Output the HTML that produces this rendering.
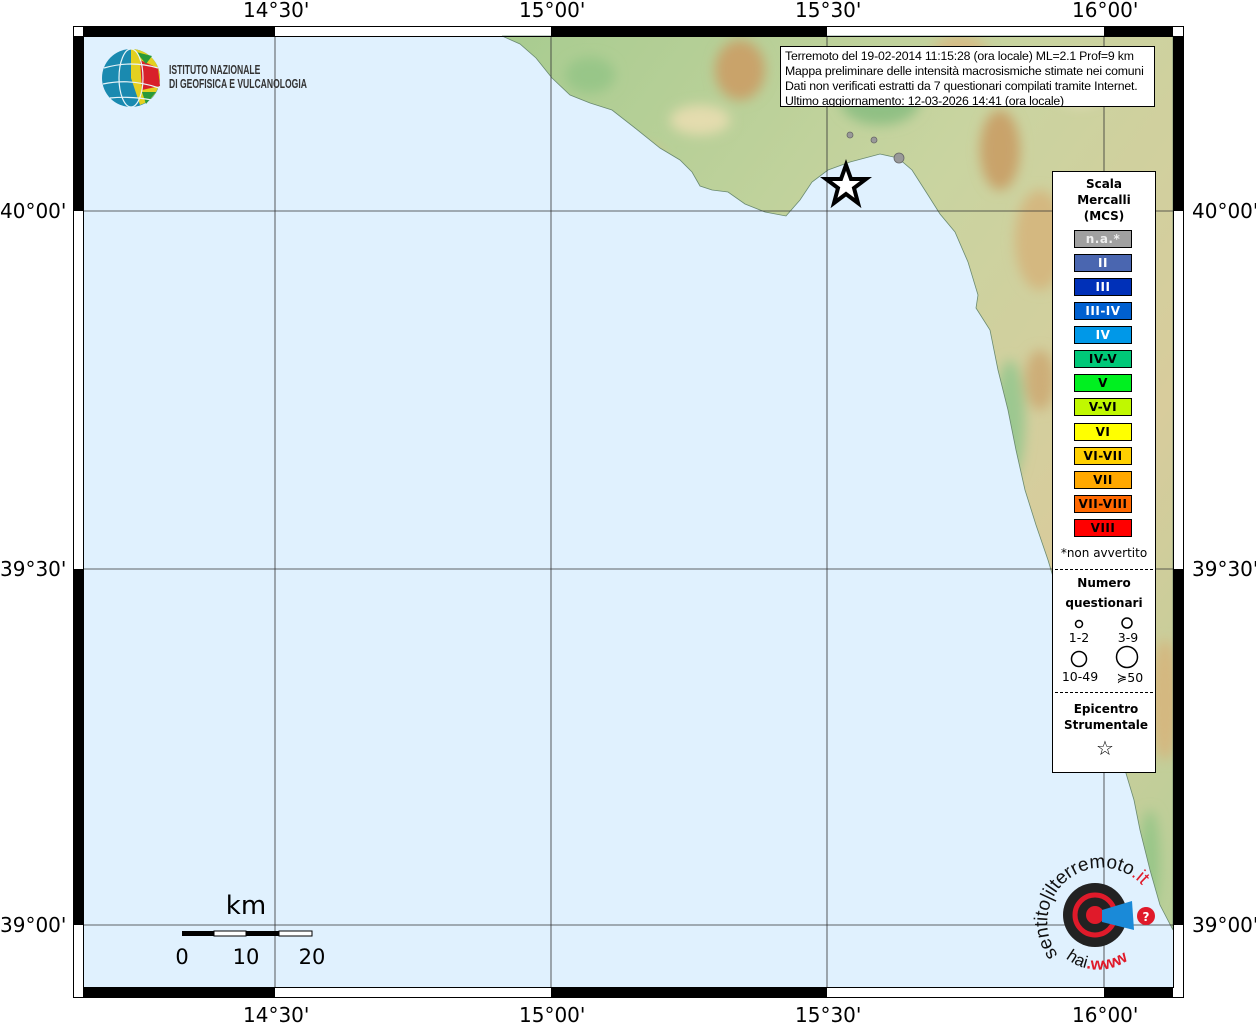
<!DOCTYPE html>
<html><head><meta charset="utf-8"><style>
body{margin:0;width:1256px;height:1024px;background:#fff;position:relative;overflow:hidden;font-family:"DejaVu Sans","Liberation Sans",sans-serif}
.ax{position:absolute;font-family:"DejaVu Sans",sans-serif;font-size:20px;color:#000;line-height:20px}
.lg{position:absolute;left:1052px;top:171px;width:102px;height:600px;background:#fff;border:1px solid #000}
.b{position:absolute;left:21px;width:56px;height:16px;border:1px solid #000;font-weight:bold;font-size:12px;text-align:center;line-height:16px;letter-spacing:.5px}
.t{position:absolute;width:102px;text-align:center;font-size:12px;font-weight:bold;line-height:16px}
.info{position:absolute;left:780px;top:46px;width:375px;height:61px;background:#fff;border:1px solid #000;font-family:"Liberation Sans",sans-serif;font-size:12.3px;line-height:15px;padding:2px 0 0 4px;box-sizing:border-box;white-space:nowrap;overflow:hidden;letter-spacing:-.2px}
</style></head><body>
<svg width="1256" height="1024" style="position:absolute;left:0;top:0">
<defs><linearGradient id="lnd" x1="0" y1="0" x2="1" y2="1"><stop offset="0" stop-color="#a8cc90"/><stop offset=".4" stop-color="#c9d4a0"/><stop offset=".7" stop-color="#d8cc9c"/><stop offset="1" stop-color="#b8cf98"/></linearGradient>
<filter id="bl"><feGaussianBlur stdDeviation="6"/></filter>
<clipPath id="lc"><path id="land" d="M502 36 L520 44 L536 58 L552 78 L570 95 L590 103 L612 110 L635 128 L660 148 L680 160 L692 172 L700 186 L712 190 L728 192 L745 204 L765 212 L786 216 L800 200 L812 182 L828 170 L850 162 L880 154 L898 158 L912 170 L928 195 L940 214 L955 232 L968 262 L978 295 L976 308 L990 330 L998 370 L1008 410 L1016 450 L1025 490 L1036 525 L1048 560 L1060 600 L1075 640 L1092 680 L1108 720 L1122 760 L1134 800 L1140 830 L1150 870 L1160 905 L1173 930 L1173 36 Z"/></clipPath></defs>
<rect x="83" y="36" width="1090" height="951" fill="#e0f1fe"/>
<use href="#land" fill="url(#lnd)"/>
<g clip-path="url(#lc)" filter="url(#bl)">
<ellipse cx="740" cy="70" rx="25" ry="30" fill="#c9a36a"/>
<ellipse cx="700" cy="120" rx="30" ry="15" fill="#e4dcae"/>
<ellipse cx="640" cy="160" rx="25" ry="15" fill="#d8c08a"/>
<ellipse cx="1000" cy="150" rx="20" ry="40" fill="#c9a36a"/>
<ellipse cx="1080" cy="80" rx="30" ry="25" fill="#e8e0c0"/>
<ellipse cx="960" cy="60" rx="30" ry="25" fill="#d6bc86"/>
<ellipse cx="880" cy="100" rx="40" ry="25" fill="#90c084"/>
<ellipse cx="1040" cy="240" rx="25" ry="50" fill="#d4b880"/>
<ellipse cx="1010" cy="420" rx="15" ry="60" fill="#9cc890"/>
<ellipse cx="1040" cy="380" rx="15" ry="30" fill="#cdae78"/>
<ellipse cx="1165" cy="700" rx="15" ry="60" fill="#d4b880"/>
<ellipse cx="1150" cy="860" rx="10" ry="50" fill="#98c688"/>
<ellipse cx="590" cy="75" rx="25" ry="18" fill="#98c688"/>
</g>
<use href="#land" fill="none" stroke="#6a8a70" stroke-width="0.8"/>
<g stroke="#333" stroke-width="0.8"><line x1="275" y1="36" x2="275" y2="987"/><line x1="551" y1="36" x2="551" y2="987"/><line x1="827" y1="36" x2="827" y2="987"/><line x1="1104" y1="36" x2="1104" y2="987"/><line x1="83" y1="211" x2="1173" y2="211"/><line x1="83" y1="569" x2="1173" y2="569"/><line x1="83" y1="925" x2="1173" y2="925"/></g>
<rect x="73.5" y="26.5" width="1110" height="971" fill="none" stroke="#000"/>
<rect x="83.5" y="36.5" width="1090" height="951" fill="none" stroke="#000"/>
<g fill="#000"><rect x="83" y="27" width="192" height="9"/><rect x="551" y="27" width="276" height="9"/><rect x="1104" y="27" width="69" height="9"/>
<rect x="83" y="988" width="192" height="9"/><rect x="551" y="988" width="276" height="9"/><rect x="1104" y="988" width="69" height="9"/>
<rect x="74" y="36" width="9" height="175"/><rect x="74" y="569" width="9" height="356"/>
<rect x="1174" y="36" width="9" height="175"/><rect x="1174" y="569" width="9" height="356"/></g>
<g fill="#999" stroke="#666" stroke-width="0.8"><circle cx="850" cy="135" r="3"/><circle cx="874" cy="140" r="3"/><circle cx="899" cy="158" r="5"/></g>
<path d="M846 165 L851 179 L866 179 L854 188 L858 203 L846 194 L834 203 L838 188 L826 179 L841 179 Z" fill="#fff" stroke="#000" stroke-width="4" stroke-linejoin="miter"/>
<g><rect x="182" y="931" width="32" height="5" fill="#000"/><rect x="214" y="931" width="32" height="5" fill="#fff" stroke="#000" stroke-width="1"/><rect x="246" y="931" width="33" height="5" fill="#000"/><rect x="279" y="931" width="33" height="5" fill="#fff" stroke="#000" stroke-width="1"/></g>
<text x="246" y="914" font-family="DejaVu Sans" font-size="26" text-anchor="middle">km</text>
<g font-family="DejaVu Sans" font-size="21" text-anchor="middle"><text x="182" y="964">0</text><text x="246" y="964">10</text><text x="312" y="964">20</text></g>
<!-- INGV logo -->
<circle cx="131" cy="78" r="29" fill="#1a8ab0"/>
<path d="M131 49 A29 29 0 0 1 160 78 A29 29 0 0 1 140 105 L131 78 Z" fill="#e4d020"/>
<path d="M140 60 L158 68 L160 86 L142 90 Z" fill="#d8202a"/>
<path d="M142 92 L156 92 L146 104 Z" fill="#2a9a3a"/>
<path d="M136 52 L152 56 L146 64 Z" fill="#2a9a3a"/>
<g stroke="#e8f4f8" stroke-width="1.2" fill="none"><ellipse cx="131" cy="78" rx="12" ry="29"/><path d="M104 68 Q131 60 158 68"/><path d="M103 84 Q131 78 159 88"/><path d="M110 98 Q131 96 152 100"/></g>
<!-- hai sentito logo -->
<circle cx="1095" cy="915" r="32" fill="#222"/>
<circle cx="1095" cy="915" r="20" fill="none" stroke="#e01a2a" stroke-width="5"/>
<circle cx="1095" cy="915" r="9" fill="#e01a2a"/>
<path d="M1102 910 L1132 901 L1134 930 L1102 922 Z" fill="#1a8ad8"/>
<circle cx="1146" cy="916" r="9" fill="#e01a2a"/>
<text x="1146" y="921" font-size="12" font-weight="bold" fill="#fff" text-anchor="middle">?</text>
<path id="arc" d="M1058 955 A52 52 0 1 1 1146 890" fill="none"/>
<text font-family="Liberation Sans" font-size="19" fill="#111"><textPath href="#arc">sentito|ilterremoto<tspan fill="#e01a2a">.it</tspan></textPath></text>
<path id="arc2" d="M1056 948 A52 52 0 0 0 1146 938" fill="none"/>
<text font-family="Liberation Sans" font-size="17" fill="#111"><textPath href="#arc2" startOffset="14">hai<tspan fill="#e01a2a" font-weight="bold">.www</tspan></textPath></text>
</svg>
<div style="position:absolute;left:169px;top:63px;font-family:'Liberation Sans',sans-serif;font-weight:bold;font-size:13px;line-height:14px;color:#333;transform:scaleX(.66);transform-origin:0 0;white-space:nowrap">ISTITUTO NAZIONALE<br>DI GEOFISICA E VULCANOLOGIA</div>
<div class="ax" style="left:243px;top:0">14°30'</div><div class="ax" style="left:519px;top:0">15°00'</div><div class="ax" style="left:795px;top:0">15°30'</div><div class="ax" style="left:1072px;top:0">16°00'</div>
<div class="ax" style="left:243px;top:1005px">14°30'</div><div class="ax" style="left:519px;top:1005px">15°00'</div><div class="ax" style="left:795px;top:1005px">15°30'</div><div class="ax" style="left:1072px;top:1005px">16°00'</div>
<div class="ax" style="left:0;top:201px">40°00'</div><div class="ax" style="left:0;top:559px">39°30'</div><div class="ax" style="left:0;top:915px">39°00'</div>
<div class="ax" style="left:1192px;top:201px">40°00'</div><div class="ax" style="left:1192px;top:559px">39°30'</div><div class="ax" style="left:1192px;top:915px">39°00'</div>
<div class="info">Terremoto del 19-02-2014 11:15:28 (ora locale) ML=2.1 Prof=9 km<br>Mappa preliminare delle intensità macrosismiche stimate nei comuni<br>Dati non verificati estratti da 7 questionari compilati tramite Internet.<br>Ultimo aggiornamento: 12-03-2026 14:41 (ora locale)</div>
<div class="lg">
<div class="t" style="top:4px">Scala<br>Mercalli<br>(MCS)</div>
<div class="b" style="top:58px;background:#a0a0a0;color:#eee">n.a.*</div>
<div class="b" style="top:82px;background:#4a66b0;color:#fff">II</div>
<div class="b" style="top:106px;background:#0030b8;color:#fff">III</div>
<div class="b" style="top:130px;background:#0060d0;color:#fff">III-IV</div>
<div class="b" style="top:154px;background:#0098e8;color:#fff">IV</div>
<div class="b" style="top:178px;background:#00c878">IV-V</div>
<div class="b" style="top:202px;background:#00f020">V</div>
<div class="b" style="top:226px;background:#c0f800">V-VI</div>
<div class="b" style="top:251px;background:#ffff00">VI</div>
<div class="b" style="top:275px;background:#ffd000">VI-VII</div>
<div class="b" style="top:299px;background:#ffa800">VII</div>
<div class="b" style="top:323px;background:#ff6800">VII-VIII</div>
<div class="b" style="top:347px;background:#ff0000">VIII</div>
<div class="t" style="top:373px;font-weight:normal;font-size:12px">*non avvertito</div>
<div style="position:absolute;left:2px;right:2px;top:397px;border-top:1px dashed #000"></div>
<div class="t" style="top:401px;line-height:20px">Numero<br>questionari</div>
<svg style="position:absolute;left:0;top:440px" width="102" height="80"><g fill="none" stroke="#000" stroke-width="1.5"><circle cx="26" cy="12" r="3.5"/><circle cx="74" cy="11" r="5"/><circle cx="26" cy="47" r="7.5"/><circle cx="74" cy="45" r="10.5"/></g>
<g font-size="12.5" text-anchor="middle" font-family="DejaVu Sans"><text x="26" y="30">1-2</text><text x="75" y="30">3-9</text><text x="27" y="69">10-49</text><text x="77" y="70">≽50</text></g></svg>
<div style="position:absolute;left:2px;right:2px;top:520px;border-top:1px dashed #000"></div>
<div class="t" style="top:529px;left:2px">Epicentro<br>Strumentale</div>
<div style="position:absolute;left:0;width:104px;top:564px;text-align:center;font-size:20px">☆</div>
</div>
</body></html>
